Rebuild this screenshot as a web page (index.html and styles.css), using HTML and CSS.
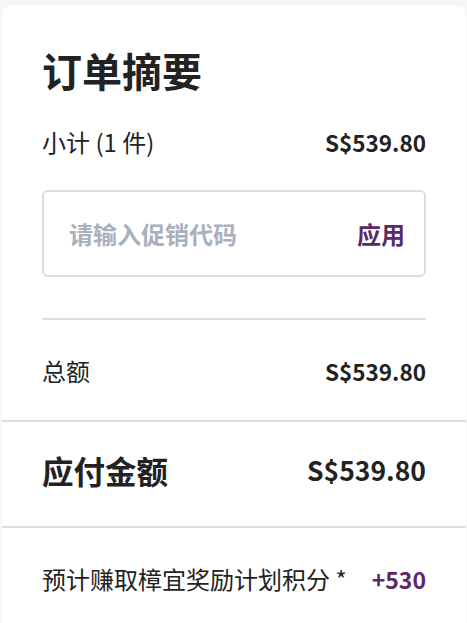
FILE: index.html
```html
<!DOCTYPE html>
<html lang="zh-CN">
<head>
<meta charset="utf-8">
<title>订单摘要</title>
<link rel="stylesheet" href="styles.css">
</head>
<body>
<div class="card">
  <div class="section top">
    <h1 class="title">订单摘要</h1>
    <div class="row subtotal">
      <span class="label">小计 (1 件)</span>
      <span class="amount">S$539.80</span>
    </div>
    <div class="promo">
      <span class="placeholder">请输入促销代码</span>
      <span class="apply">应用</span>
    </div>
    <div class="inner-divider"></div>
    <div class="row total">
      <span class="label">总额</span>
      <span class="amount">S$539.80</span>
    </div>
  </div>
  <div class="divider"></div>
  <div class="section pay">
    <div class="row due">
      <span class="due-label">应付金额</span>
      <span class="due-amount">S$539.80</span>
    </div>
  </div>
  <div class="divider"></div>
  <div class="section reward">
    <div class="row">
      <span class="label">预计赚取樟宜奖励计划积分 *</span>
      <span class="points">+530</span>
    </div>
  </div>
</div>
</body>
</html>
```

FILE: styles.css
```css
html, body {
  margin: 0;
  padding: 0;
  background: #f6f6f6;
}
body {
  font-family: "Noto Sans CJK SC", "Noto Sans", sans-serif;
  color: #222222;
  padding: 6px 1px 0 2px;
}
.card {
  background: #ffffff;
  border-radius: 8px 8px 0 0;
  min-height: 640px;
}
.section {
  padding: 0 40px;
}
.top {
  padding-top: 40px;
}
.title {
  margin: 0;
  font-size: 40px;
  line-height: 48px;
  font-weight: 700;
}
.row {
  display: flex;
  justify-content: space-between;
  align-items: center;
}
.label {
  font-size: 24px;
  line-height: 32px;
  font-weight: 400;
}
.amount {
  font-size: 22.5px;
  line-height: 32px;
  font-weight: 700;
}
.subtotal {
  margin-top: 32px;
}
.promo {
  margin-top: 32px;
  height: 87px;
  box-sizing: border-box;
  border: 2px solid #dddddd;
  border-radius: 6px;
  display: flex;
  align-items: center;
  justify-content: space-between;
  padding: 0 19px 0 25px;
}
.placeholder {
  font-size: 24px;
  font-weight: 700;
  color: #a8b0bd;
}
.apply {
  font-size: 24px;
  font-weight: 700;
  color: #5b2a65;
}
.inner-divider {
  margin-top: 41px;
  height: 2px;
  background: #dddddd;
}
.total {
  margin-top: 35px;
  padding-bottom: 33px;
}
.divider {
  height: 2px;
  background: #dddddd;
}
.pay {
  padding-top: 28px;
  padding-bottom: 36px;
}
.due-label {
  font-size: 31.5px;
  line-height: 40px;
  font-weight: 700;
}
.due-amount {
  font-size: 26.5px;
  line-height: 40px;
  font-weight: 700;
}
.reward {
  padding-top: 35px;
}
.points {
  font-size: 23px;
  line-height: 32px;
  font-weight: 700;
  color: #5b2a65;
}
```
